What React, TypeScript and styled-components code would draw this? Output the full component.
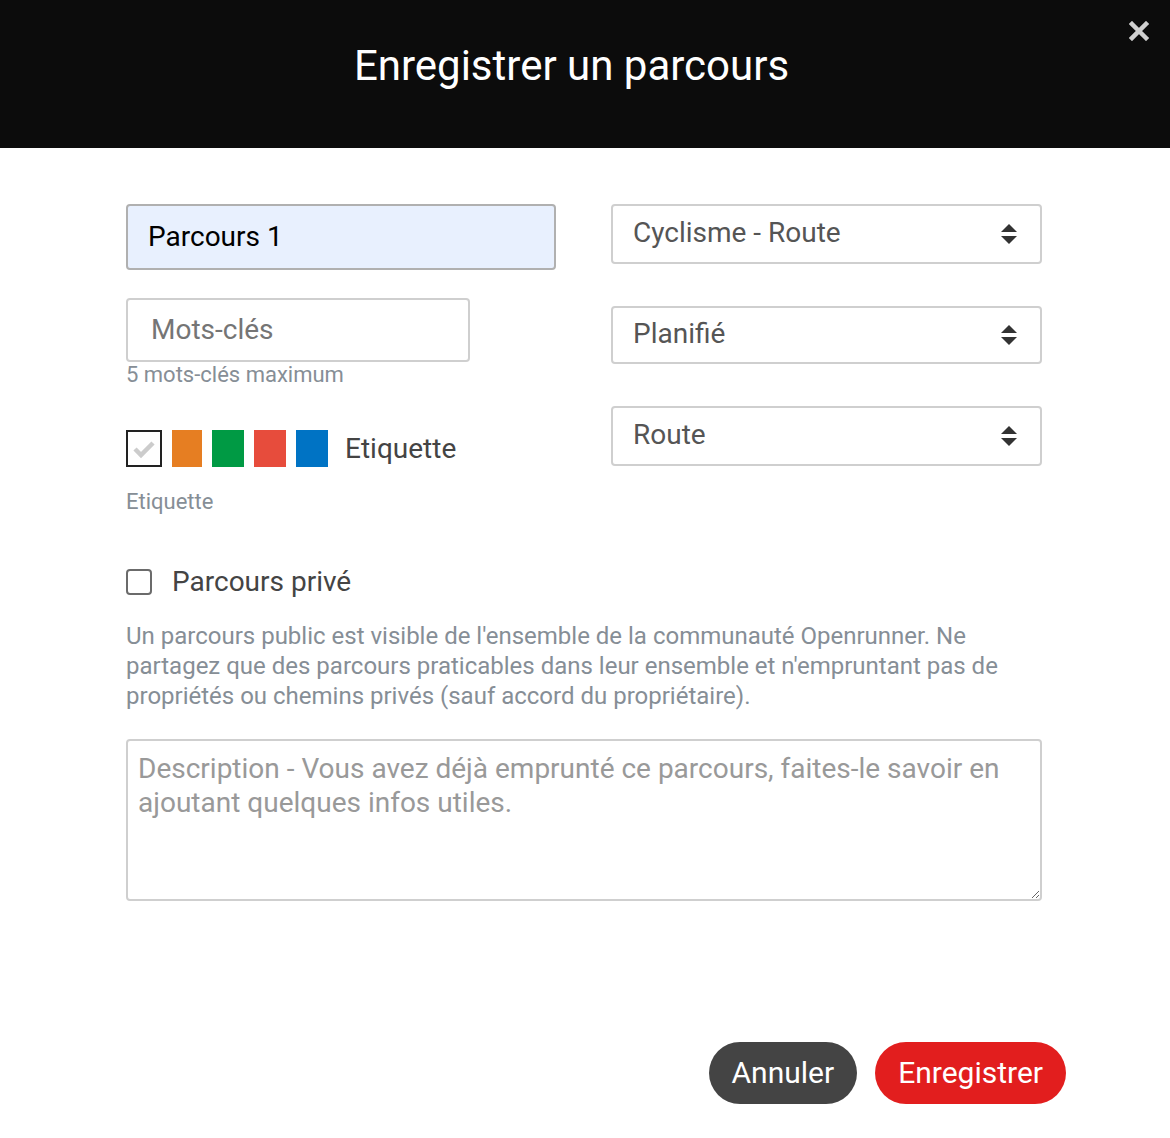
import React, { useState } from 'react';
import styled, { createGlobalStyle } from 'styled-components';

const GlobalStyle = createGlobalStyle`
  body {
    margin: 0;
    font-family: Roboto, "Liberation Sans", sans-serif;
    background: #ffffff;
  }
`;

const Page = styled.div`
  width: 1170px;
  min-height: 1138px;
  background: #ffffff;
  display: flex;
  flex-direction: column;
`;

const Header = styled.header`
  position: relative;
  height: 148px;
  background-color: #0c0c0c;
  display: flex;
  justify-content: center;
  align-items: flex-start;
  padding: 42px 27px 0 0;
  box-sizing: border-box;
`;

const Title = styled.h1`
  margin: 0;
  font-size: 42px;
  line-height: 48px;
  font-weight: 400;
  color: #ffffff;
`;

const CloseBtn = styled.button`
  position: absolute;
  top: 19px;
  right: 19px;
  width: 24px;
  height: 24px;
  padding: 0;
  border: none;
  background: transparent;
  cursor: pointer;
  display: flex;
  align-items: center;
  justify-content: center;
`;

const Body = styled.div`
  width: 916px;
  margin-left: 126px;
  padding-top: 56px;
  display: flex;
  flex-direction: column;
`;

const Columns = styled.div`
  display: grid;
  grid-template-columns: 430px 431px;
  column-gap: 55px;
`;

const Column = styled.div`
  display: flex;
  flex-direction: column;
  align-items: flex-start;
`;

const TextInput = styled.input<{ $filled?: boolean; $width: number; $height: number; $pad: number }>`
  box-sizing: border-box;
  width: ${(p) => p.$width}px;
  height: ${(p) => p.$height}px;
  padding: 0 ${(p) => p.$pad}px 1px;
  font-family: inherit;
  font-size: 28px;
  color: #000;
  background: ${(p) => (p.$filled ? '#e8f0fe' : '#ffffff')};
  border: 2px solid ${(p) => (p.$filled ? '#b0b0b0' : '#cfcfcf')};
  border-radius: 4px;
  outline: none;

  &::placeholder {
    color: #757575;
  }
`;

const Helper = styled.div<{ $mt?: number }>`
  margin-top: ${(p) => p.$mt ?? 0}px;
  font-size: 22px;
  line-height: 26px;
  color: #868e96;
`;

const SwatchRow = styled.div`
  margin-top: 42px;
  display: flex;
  align-items: center;
  gap: 10px;
`;

const Swatch = styled.button<{ $color: string; $w: number }>`
  width: ${(p) => p.$w}px;
  height: 37px;
  padding: 0;
  border: none;
  background: ${(p) => p.$color};
  cursor: pointer;
`;

const NoneSwatch = styled.button`
  box-sizing: border-box;
  width: 36px;
  height: 37px;
  padding: 0;
  border: 2px solid #222;
  background: #fff;
  display: flex;
  align-items: center;
  justify-content: center;
  cursor: pointer;
`;

const SwatchLabel = styled.span`
  margin-left: 7px;
  font-size: 28px;
  color: #444;
`;

const SelectBox = styled.div<{ $height: number; $mt?: number }>`
  box-sizing: border-box;
  width: 431px;
  height: ${(p) => p.$height}px;
  margin-top: ${(p) => p.$mt ?? 0}px;
  border: 2px solid #cfcfcf;
  border-radius: 4px;
  padding: 0 23px 3px 20px;
  display: flex;
  align-items: center;
  justify-content: space-between;
  font-size: 28px;
  color: #555;
  cursor: pointer;

  svg {
    margin-top: 3px;
  }
`;

const PrivateRow = styled.label`
  margin-top: 50px;
  display: flex;
  align-items: center;
  gap: 20px;
  font-size: 28px;
  line-height: 34px;
  color: #444;
  cursor: pointer;
`;

const CheckBox = styled.span<{ $on: boolean }>`
  box-sizing: border-box;
  width: 26px;
  height: 26px;
  border: 2px solid #6b6b6b;
  border-radius: 4px;
  background: ${(p) => (p.$on ? '#444' : '#fff')};
`;

const Notice = styled.p`
  margin: 22px 0 0;
  font-size: 24px;
  line-height: 30px;
  color: #868e96;
`;

const Description = styled.textarea`
  box-sizing: border-box;
  margin-top: 28px;
  width: 916px;
  height: 162px;
  padding: 11px 10px 9px;
  font-family: inherit;
  font-size: 28px;
  line-height: 34px;
  border: 2px solid #cfcfcf;
  border-radius: 4px;
  outline: none;
  resize: vertical;

  &::placeholder {
    color: #999;
  }
`;

const Footer = styled.div`
  margin-top: auto;
  padding: 0 104px 34px 0;
  display: flex;
  justify-content: flex-end;
  gap: 18px;
`;

const PillButton = styled.button<{ $variant: 'dark' | 'red' }>`
  height: 62px;
  padding: 0 23px;
  border: none;
  border-radius: 31px;
  font-family: inherit;
  font-size: 30px;
  line-height: 58px;
  color: #fff;
  background: ${(p) => (p.$variant === 'red' ? '#e21e1e' : '#444444')};
  cursor: pointer;
`;

const Arrows = () => (
  <svg width="16" height="22" viewBox="0 0 16 22">
    <path d="M8 1 L16 9 L0 9 Z" fill="#333" />
    <path d="M0 13 L16 13 L8 21 Z" fill="#333" />
  </svg>
);

const swatches = [
  { color: '#e67e22', w: 30 },
  { color: '#009a44', w: 32 },
  { color: '#e74c3c', w: 32 },
  { color: '#0073c4', w: 32 },
];

const App = () => {
  const [isPrivate, setIsPrivate] = useState(false);

  return (
    <Page>
      <GlobalStyle />
      <Header>
        <Title>Enregistrer un parcours</Title>
        <CloseBtn aria-label="Fermer">
          <svg width="20" height="20" viewBox="0 0 20 20">
            <path d="M3 3 L17 17 M17 3 L3 17" stroke="#d0d0d0" strokeWidth="4.5" strokeLinecap="square" />
          </svg>
        </CloseBtn>
      </Header>

      <Body>
        <Columns>
          <Column>
            <TextInput $filled $width={430} $height={66} $pad={20} defaultValue="Parcours 1" />
            <TextInput
              $width={344}
              $height={64}
              $pad={23}
              placeholder="Mots-clés"
              style={{ marginTop: 28 }}
            />
            <Helper>5 mots-clés maximum</Helper>
            <SwatchRow>
              <NoneSwatch aria-label="Aucune">
                <svg width="24" height="20" viewBox="0 0 24 20">
                  <path d="M3 10 L9 16 L21 4" fill="none" stroke="#cccccc" strokeWidth="4.5" />
                </svg>
              </NoneSwatch>
              {swatches.map((s) => (
                <Swatch key={s.color} $color={s.color} $w={s.w} />
              ))}
              <SwatchLabel>Etiquette</SwatchLabel>
            </SwatchRow>
            <Helper $mt={22}>Etiquette</Helper>
          </Column>

          <Column>
            <SelectBox $height={60}>
              <span>Cyclisme - Route</span>
              <Arrows />
            </SelectBox>
            <SelectBox $height={58} $mt={42}>
              <span>Planifié</span>
              <Arrows />
            </SelectBox>
            <SelectBox $height={60} $mt={42}>
              <span>Route</span>
              <Arrows />
            </SelectBox>
          </Column>
        </Columns>

        <PrivateRow onClick={() => setIsPrivate((v) => !v)}>
          <CheckBox $on={isPrivate} />
          Parcours privé
        </PrivateRow>

        <Notice>
          Un parcours public est visible de l'ensemble de la communauté Openrunner. Ne partagez que des
          parcours praticables dans leur ensemble et n'empruntant pas de propriétés ou chemins privés
          (sauf accord du propriétaire).
        </Notice>

        <Description placeholder="Description - Vous avez déjà emprunté ce parcours, faites-le savoir en ajoutant quelques infos utiles." />
      </Body>

      <Footer>
        <PillButton $variant="dark">Annuler</PillButton>
        <PillButton $variant="red">Enregistrer</PillButton>
      </Footer>
    </Page>
  );
};

export default App;
